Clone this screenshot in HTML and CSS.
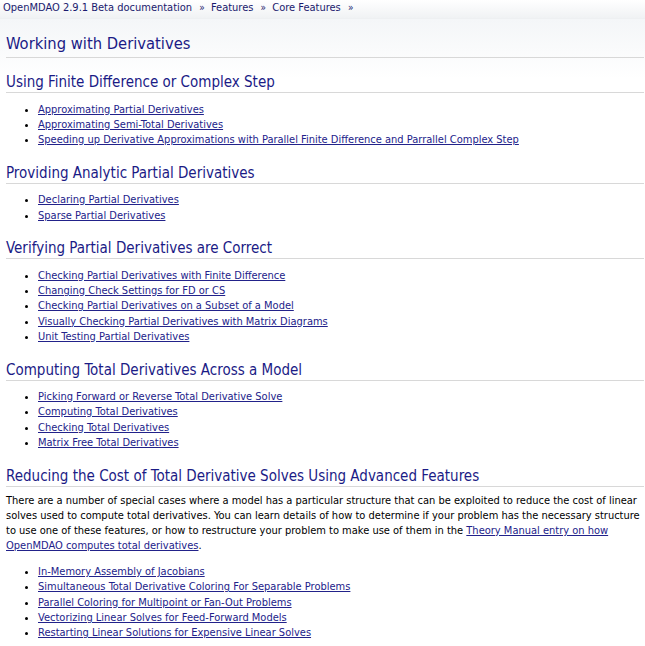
FILE: index.html
```html
<!DOCTYPE html>
<html>
<head>
<meta charset="utf-8">
<link rel="stylesheet" href="styles.css">
</head>
<body>
<div class="related">
  <a href="#">OpenMDAO 2.9.1 Beta documentation</a> <span class="sep">»</span> <a href="#">Features</a> <span class="sep">»</span> <a href="#">Core Features</a> <span class="sep">»</span>
</div>
<div class="document">
  <h1>Working with Derivatives</h1>

  <h2>Using Finite Difference or Complex Step</h2>
  <ul>
    <li><a href="#">Approximating Partial Derivatives</a></li>
    <li><a href="#">Approximating Semi-Total Derivatives</a></li>
    <li><a href="#">Speeding up Derivative Approximations with Parallel Finite Difference and Parrallel Complex Step</a></li>
  </ul>

  <h2>Providing Analytic Partial Derivatives</h2>
  <ul>
    <li><a href="#">Declaring Partial Derivatives</a></li>
    <li><a href="#">Sparse Partial Derivatives</a></li>
  </ul>

  <h2>Verifying Partial Derivatives are Correct</h2>
  <ul>
    <li><a href="#">Checking Partial Derivatives with Finite Difference</a></li>
    <li><a href="#">Changing Check Settings for FD or CS</a></li>
    <li><a href="#">Checking Partial Derivatives on a Subset of a Model</a></li>
    <li><a href="#">Visually Checking Partial Derivatives with Matrix Diagrams</a></li>
    <li><a href="#">Unit Testing Partial Derivatives</a></li>
  </ul>

  <h2>Computing Total Derivatives Across a Model</h2>
  <ul>
    <li><a href="#">Picking Forward or Reverse Total Derivative Solve</a></li>
    <li><a href="#">Computing Total Derivatives</a></li>
    <li><a href="#">Checking Total Derivatives</a></li>
    <li><a href="#">Matrix Free Total Derivatives</a></li>
  </ul>

  <h2>Reducing the Cost of Total Derivative Solves Using Advanced Features</h2>
  <p>There are a number of special cases where a model has a particular structure that can be exploited to reduce the cost of linear solves used to compute total derivatives. You can learn details of how to determine if your problem has the necessary structure to use one of these features, or how to restructure your problem to make use of them in the <a href="#">Theory Manual entry on how OpenMDAO computes total derivatives</a>.</p>
  <ul>
    <li><a href="#">In-Memory Assembly of Jacobians</a></li>
    <li><a href="#">Simultaneous Total Derivative Coloring For Separable Problems</a></li>
    <li><a href="#">Parallel Coloring for Multipoint or Fan-Out Problems</a></li>
    <li><a href="#">Vectorizing Linear Solves for Feed-Forward Models</a></li>
    <li><a href="#">Restarting Linear Solutions for Expensive Linear Solves</a></li>
  </ul>
</div>
</body>
</html>
```
FILE: styles.css
```css
html, body {
  margin: 0;
  padding: 0;
  background: #ffffff;
  font-family: "DejaVu Sans Condensed", "DejaVu Sans", sans-serif;
  font-size: 11px;
  color: #000000;
}

.related {
  height: 18px;
  line-height: 15px;
  padding: 0 0 0 3px;
  font-size: 11px;
  color: #1a1a6e;
  background: linear-gradient(#ffffff, #f0f2f4);
  border-bottom: 1px solid #eef0f2;
}

.related a {
  color: #1a1a6e;
  text-decoration: none;
}

.related .sep {
  font-size: 10px;
  margin: 0 3px 0 4px;
}

.document {
  padding: 0 1px 0 6px;
  background: linear-gradient(#f4f6f8 0px, #ffffff 60px);
}

h1, h2 {
  font-weight: normal;
  color: #1b1b86;
  margin: 0;
  border-bottom: 1px solid #d8d8d8;
}

h1 {
  font-size: 16.4px;
  line-height: 22px;
  padding: 14px 0 2px 0;
}

h2 {
  font-size: 15px;
  line-height: 20px;
  padding: 0;
  margin-top: 15px;
}

h1 + h2 {
  margin-top: 14px;
}

ul {
  margin: 8.5px 0 15.5px 0;
  padding-left: 32px;
  list-style: disc;
}

li {
  line-height: 15px;
  padding-bottom: 0.25px;
}

a {
  color: #22228a;
  text-decoration: underline;
}

p {
  margin: 6px 0 10.5px 0;
  line-height: 15.3px;
}
```
